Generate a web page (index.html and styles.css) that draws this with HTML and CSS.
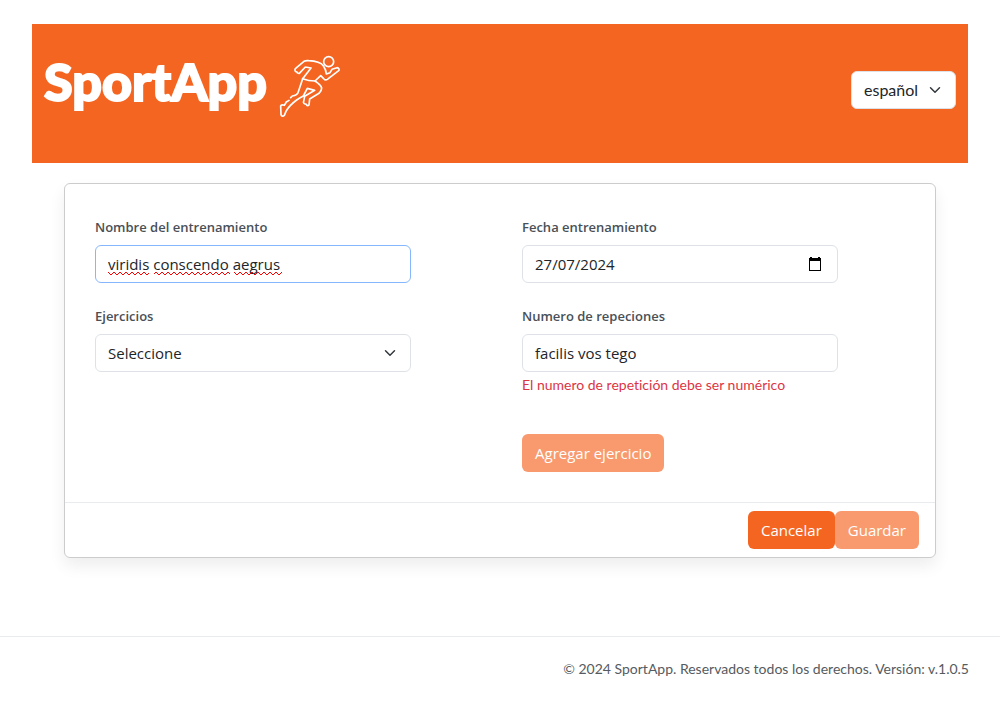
FILE: index.html
```html
<!DOCTYPE html>
<html lang="es">
<head>
<meta charset="utf-8">
<meta name="viewport" content="width=device-width, initial-scale=1">
<title>SportApp</title>
<link rel="stylesheet" href="styles.css">
</head>
<body>
<div class="page">
  <header class="header">
    <div class="brand">
      <span class="brand-name">SportApp</span>
      <svg class="runner" viewBox="24 24 192 192" aria-hidden="true">
        <circle cx="176" cy="47" r="15"/>
        <path d="M62 155 L67 150 Q82 148 85 137 L98 98 L123 66 L106 63 L88 82 Q81 82 81 78 Q72 76 76 68 L102 46 Q107 43 116 44 Q150 46 160 59 Q168 71 169 84 L180 80 L186 70 L201 65 Q209 67 207 73 L172 100 Q166 104 161 98 L152 89 L135 105 Q153 117 155 126 Q155 135 147 142 L119 159 L117 177 Q112 182 109 175 Q98 173 101 166 L104 151 L134 133 L112 127 L100 150 Q88 156 80 162 Q58 178 48 196 L43 208 Q36 214 33 206 L32 180 Q35 175 43 178 L49 168 L57 163"/>
        <path d="M98 98 Q116 105 135 105"/>
      </svg>
    </div>
    <select class="field select language" aria-label="Idioma"><option>español</option></select>
  </header>

  <main>
    <form class="card">
      <div class="card-body">
        <div class="group">
          <label for="name">Nombre del entrenamiento</label>
          <div class="control">
            <input class="field focused" id="name" type="text" value="viridis conscendo aegrus" spellcheck="false">
            <svg class="spelling" width="176" height="6" aria-hidden="true">
              <defs>
                <pattern id="wave" width="6" height="6" patternUnits="userSpaceOnUse">
                  <path d="M-1 2 L0 1 L3 4 L6 1 L7 2"/>
                </pattern>
              </defs>
              <rect x="0" width="41" height="6"/>
              <rect x="46" width="76" height="6"/>
              <rect x="126" width="48" height="6"/>
            </svg>
          </div>
        </div>
        <div class="group">
          <label for="date">Fecha entrenamiento</label>
          <div class="control">
            <input class="field" id="date" type="text" inputmode="numeric" value="27/07/2024">
            <button class="calendar" type="button" aria-label="Abrir calendario">
              <svg viewBox="0 0 14 15" width="14" height="15" aria-hidden="true">
                <path fill-rule="evenodd" d="M2 1V0h2v1h6V0h2v1h1v13H1V1zM2 4v9h10V4z"/>
              </svg>
            </button>
          </div>
        </div>
        <div class="group">
          <label for="exercise">Ejercicios</label>
          <select class="field select" id="exercise"><option>Seleccione</option></select>
        </div>
        <div class="group">
          <label for="reps">Numero de repeciones</label>
          <input class="field" id="reps" type="text" value="facilis vos tego" spellcheck="false" aria-describedby="reps-error">
          <p class="error" id="reps-error">El numero de repetición debe ser numérico</p>
          <button class="btn add" type="button" disabled>Agregar ejercicio</button>
        </div>
      </div>
      <div class="card-footer">
        <button class="btn" type="button">Cancelar</button>
        <button class="btn" type="submit" disabled>Guardar</button>
      </div>
    </form>
  </main>
</div>
<footer class="footer">© 2024 SportApp. Reservados todos los derechos. Versión: v.1.0.5</footer>
</body>
</html>
```
FILE: styles.css
```css
* { box-sizing: border-box; }

body {
  margin: 0;
  background: #fff;
  color: #212529;
  font-family: "Open Sans", sans-serif;
  font-size: 15px;
  font-variant-ligatures: none;
  line-height: 24px;
}

.page { padding: 24px 32px 78px; }

.header {
  display: flex;
  justify-content: space-between;
  align-items: flex-start;
  padding: 28px 12px 45px;
  background: #f56522;
}

.brand {
  display: flex;
  align-items: flex-start;
  gap: 11px;
}

.brand-name {
  color: #fff;
  font-family: Lato, sans-serif;
  font-size: 52px;
  font-weight: 900;
  line-height: 58px;
  -webkit-text-stroke: 2px #fff;
}

.runner {
  width: 64px;
  height: 64px;
  margin-top: 2px;
  fill: none;
  stroke: #fff;
  stroke-width: 5;
  stroke-linecap: round;
  stroke-linejoin: round;
}

.card {
  margin: 20px 32px 0;
  border: 1px solid #ccc;
  border-radius: 6px;
  background: #fff;
  box-shadow: 0 8px 16px rgba(0, 0, 0, .07);
}

.card-body {
  display: grid;
  grid-template-columns: 1fr 1fr;
  gap: 22px 111px;
  padding: 32px 97px 30px 30px;
}

.group { min-width: 0; }

label {
  display: block;
  padding-top: 1px;
  margin-bottom: 7px;
  color: #495057;
  font-size: 13px;
  font-weight: 600;
  line-height: 21px;
}

.control { position: relative; }

.field {
  display: block;
  width: 100%;
  height: 38px;
  padding: 6px 12px;
  border: 1px solid #dee2e6;
  border-radius: 6px;
  outline: 0;
  background: #fff;
  color: #212529;
  font: inherit;
}

.focused { border-color: #86b7fe; }

.select {
  appearance: none;
  padding-right: 36px;
  background: #fff url("data:image/svg+xml,%3Csvg xmlns='http://www.w3.org/2000/svg' viewBox='0 0 16 16'%3E%3Cpath fill='none' stroke='%23343a40' stroke-linecap='round' stroke-linejoin='round' stroke-width='2' d='m2 5 6 6 6-6'/%3E%3C/svg%3E") no-repeat right 12px center / 16px 12px;
}

.language {
  width: 105px;
  margin-top: 19px;
  font-family: Lato, sans-serif;
  font-size: 16px;
}

.spelling {
  position: absolute;
  left: 13px;
  bottom: 6px;
  fill: url(#wave);
  pointer-events: none;
}

.spelling path {
  fill: none;
  stroke: #f00;
  stroke-width: 1;
}

.calendar {
  position: absolute;
  top: 12px;
  right: 16px;
  display: flex;
  padding: 0;
  border: 0;
  background: none;
}

.error {
  margin: 4px 0 40px;
  color: #dc3545;
  font-family: Lato, sans-serif;
  font-size: 14px;
  line-height: 18px;
}

.btn {
  height: 38px;
  padding: 6px 13px;
  border: 0;
  border-radius: 6px;
  background: #f56522;
  color: #fff;
  font: inherit;
}

.btn:disabled { opacity: .65; }

.add { display: block; }

.card-footer {
  display: flex;
  justify-content: flex-end;
  padding: 8px 16px;
  border-top: 1px solid #e9ecef;
}

.footer {
  padding: 22px 31px;
  border-top: 1px solid #e9ecef;
  color: #555b61;
  font-family: Lato, sans-serif;
  font-size: 14px;
  line-height: 20px;
  text-align: right;
}
```
